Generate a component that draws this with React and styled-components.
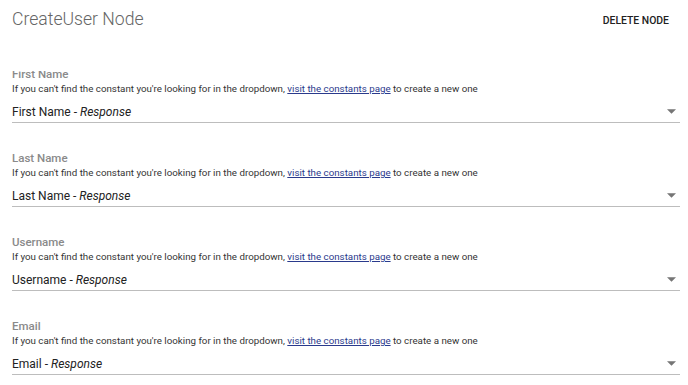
import React from "react";
import styled, { createGlobalStyle } from "styled-components";

const GlobalStyle = createGlobalStyle`
  html, body {
    margin: 0;
    padding: 0;
    background: #fff;
    font-family: Roboto, "Liberation Sans", sans-serif;
    overflow: hidden;
  }
`;

const Page = styled.div`
  width: 688px;
  height: 385px;
  display: flex;
  flex-direction: column;
  overflow: hidden;
`;

const Header = styled.div`
  display: flex;
  align-items: center;
  justify-content: space-between;
  height: 40px;
  padding: 0 11px 0 12px;
  margin-bottom: 31px;
`;

const Title = styled.h2`
  margin: 0;
  font-size: 17.6px;
  font-weight: 300;
  color: #666;
  line-height: 1;
`;

const DeleteButton = styled.button`
  border: none;
  background: none;
  padding: 6px 8px;
  font-family: inherit;
  font-size: 10.4px;
  font-weight: 500;
  color: #222;
  text-transform: uppercase;
  cursor: pointer;
`;

// the list is scrolled a little, so the first label is clipped at the top
const Scroller = styled.div`
  flex: 1;
  overflow: hidden;
  padding: 0 8px 0 12px;
`;

const List = styled.div`
  margin-top: -5px;
  display: flex;
  flex-direction: column;
  gap: 27px;
`;

const Field = styled.div`
  display: flex;
  flex-direction: column;
`;

const Label = styled.div`
  font-size: 11.5px;
  line-height: 16px;
  font-weight: 500;
  color: #8a8a8a;
`;

const Helper = styled.div`
  font-size: 9.75px;
  line-height: 14px;
  color: #333;
`;

const Link = styled.a`
  color: #2a3a8c;
  text-decoration: underline;
`;

const Select = styled.div`
  margin-top: 2px;
  height: 21px;
  padding-top: 3px;
  display: flex;
  align-items: center;
  justify-content: space-between;
  border-bottom: 1px solid #bdbdbd;
  font-size: 12px;
  color: #222;
`;

const Value = styled.span`
  em {
    font-style: italic;
  }
`;

const Arrow = styled.svg`
  width: 9px;
  height: 5px;
  margin-right: 4px;
  fill: #757575;
`;

const fields = ["First Name", "Last Name", "Username", "Email"];

export default function App() {
  return (
    <Page>
      <GlobalStyle />
      <Header>
        <Title>CreateUser Node</Title>
        <DeleteButton>Delete Node</DeleteButton>
      </Header>
      <Scroller>
        <List>
          {fields.map((name) => (
            <Field key={name}>
              <Label>{name}</Label>
              <Helper>
                If you can't find the constant you're looking for in the dropdown,{" "}
                <Link href="#">visit the constants page</Link> to create a new one
              </Helper>
              <Select>
                <Value>
                  {name} - <em>Response</em>
                </Value>
                <Arrow viewBox="0 0 10 5">
                  <path d="M0 0l5 5 5-5z" />
                </Arrow>
              </Select>
            </Field>
          ))}
        </List>
      </Scroller>
    </Page>
  );
}
